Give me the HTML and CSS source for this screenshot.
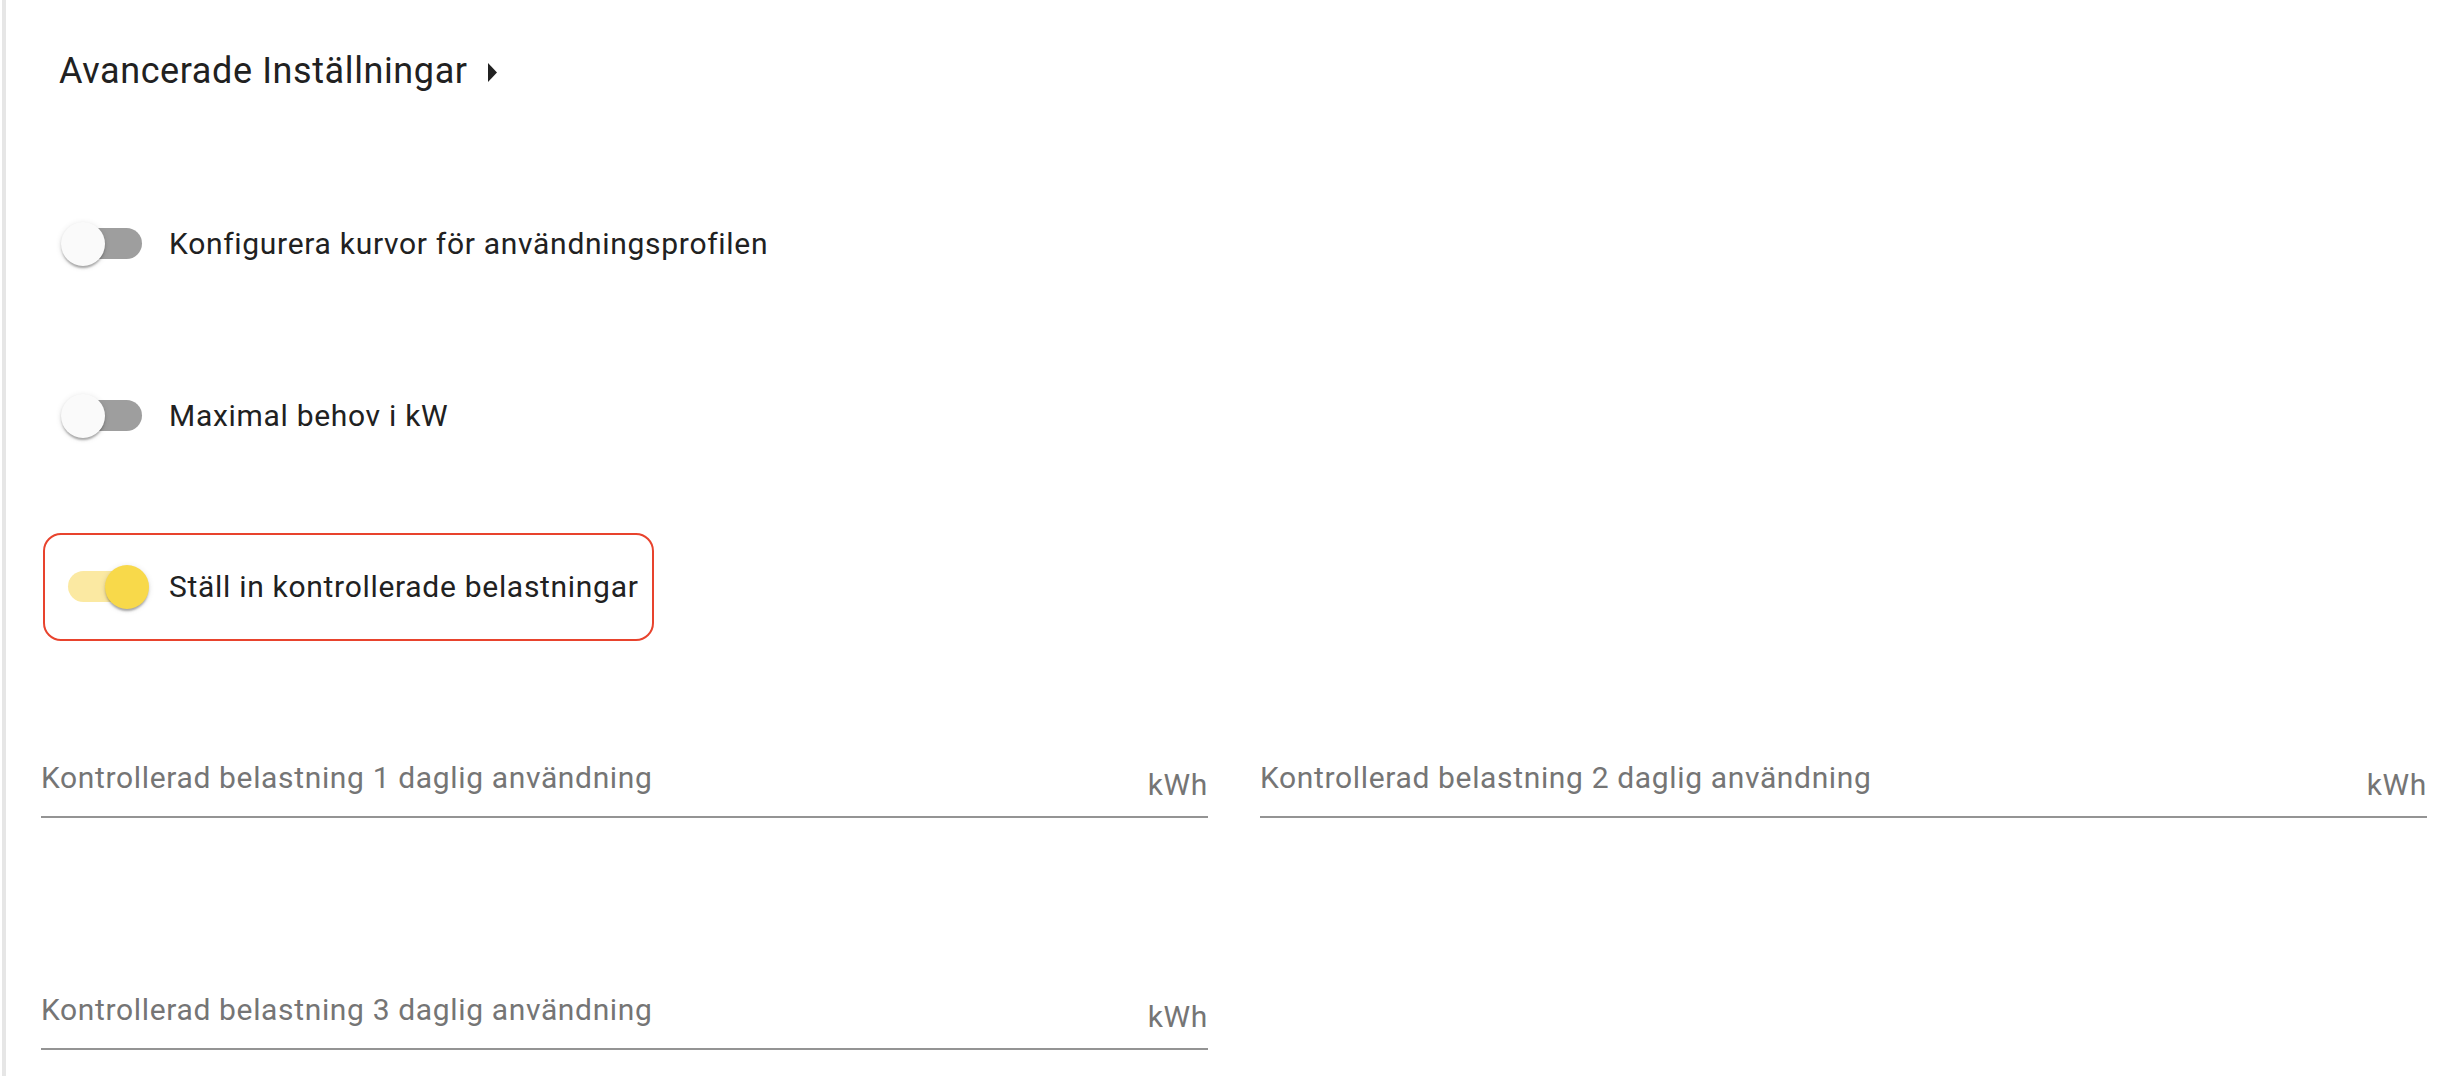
FILE: index.html
```html
<!DOCTYPE html>
<html>
  <head>
    <title>Avancerade Inställningar</title>
    <link rel="stylesheet" href="styles.css">
  </head>
  <body>
    <div class="panel">
      <div class="section-title">
        <span>Avancerade Inställningar</span>
        <svg class="caret" width="9" height="19" viewBox="0 0 9 19"><polygon points="0,0 9,9.5 0,19" /></svg>
      </div>

      <label class="switch-row first">
        <span class="switch"><span class="track"></span><span class="thumb"></span></span>
        <span class="switch-label">Konfigurera kurvor för användningsprofilen</span>
      </label>

      <label class="switch-row">
        <span class="switch"><span class="track"></span><span class="thumb"></span></span>
        <span class="switch-label">Maximal behov i kW</span>
      </label>

      <label class="switch-row highlighted">
        <span class="switch on"><span class="track"></span><span class="thumb"></span></span>
        <span class="switch-label">Ställ in kontrollerade belastningar</span>
      </label>

      <div class="fields">
        <div class="field">
          <span class="field-label">Kontrollerad belastning 1 daglig användning</span>
          <span class="suffix">kWh</span>
        </div>
        <div class="field">
          <span class="field-label">Kontrollerad belastning 2 daglig användning</span>
          <span class="suffix">kWh</span>
        </div>
        <div class="field">
          <span class="field-label">Kontrollerad belastning 3 daglig användning</span>
          <span class="suffix">kWh</span>
        </div>
      </div>
    </div>
  </body>
</html>
```

FILE: styles.css
```css
* {
  box-sizing: border-box;
}
body {
  margin: 0;
  font-family: Roboto, 'Noto Sans', sans-serif;
  color: #212121;
  background: #fff;
}
.panel {
  margin-left: 2px;
  border-left: 4px solid #e6e6e6;
  min-height: 100vh;
  padding: 0 27px 0 35px;
  display: flex;
  flex-direction: column;
  align-items: flex-start;
}
.section-title {
  margin-top: 51px;
  padding-left: 18px;
  display: flex;
  align-items: center;
  font-size: 36px;
  line-height: 40px;
  letter-spacing: 0.6px;
}
.caret {
  margin-left: 20px;
  margin-top: 2px;
  fill: #212121;
}
.switch-row {
  display: flex;
  align-items: center;
  height: 44px;
  margin-top: 128px;
  padding-left: 20px;
  cursor: pointer;
}
.switch-row.first {
  margin-top: 131px;
}
.switch-row.highlighted {
  margin-top: 95px;
  margin-left: 2px;
  height: 108px;
  padding: 30px 13px 30px 16px;
  border: 2px solid #e8432d;
  border-radius: 18px;
}
.switch {
  position: relative;
  width: 88px;
  height: 44px;
  flex: none;
}
.switch .track {
  position: absolute;
  left: 7px;
  right: 7px;
  top: 6px;
  height: 31px;
  border-radius: 16px;
  background: #9e9e9e;
}
.switch .thumb {
  position: absolute;
  left: 0;
  top: 0;
  width: 44px;
  height: 44px;
  border-radius: 50%;
  background: #fafafa;
  box-shadow: 0 3px 2px -1px rgba(0, 0, 0, 0.2), 0 2px 3px rgba(0, 0, 0, 0.14), 0 1px 6px rgba(0, 0, 0, 0.1);
}
.switch.on .track {
  background: #fbe9a2;
}
.switch.on .thumb {
  left: 44px;
  background: #f8d94a;
}
.switch-label {
  margin-left: 20px;
  font-size: 30px;
  line-height: 34px;
  letter-spacing: 0.7px;
  white-space: nowrap;
}
.fields {
  align-self: stretch;
  margin-top: 120px;
  display: grid;
  grid-template-columns: 1fr 1fr;
  column-gap: 52px;
  row-gap: 175px;
}
.field {
  display: flex;
  justify-content: space-between;
  height: 57px;
  border-bottom: 2px solid #949494;
  color: #757575;
  font-size: 30px;
  line-height: 34px;
  letter-spacing: 0.65px;
}
.field-label {
  align-self: flex-start;
}
.suffix {
  align-self: flex-end;
  padding-bottom: 14px;
}
```
